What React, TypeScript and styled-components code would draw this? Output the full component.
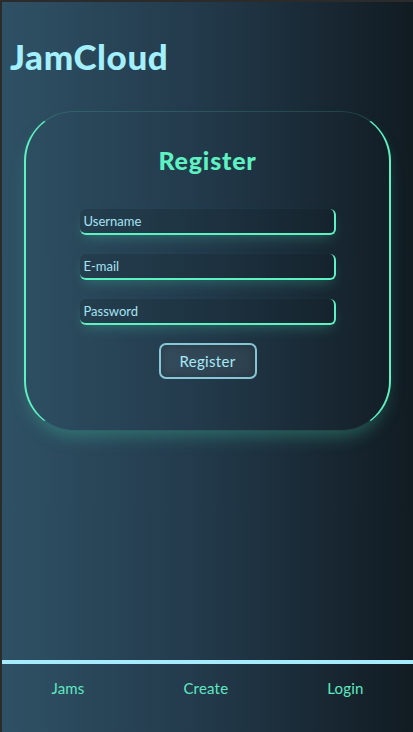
import React from "react";
import styled, { createGlobalStyle } from "styled-components";

const GlobalStyle = createGlobalStyle`
  html, body {
    margin: 0;
    padding: 0;
    background: #2b2b2b;
  }
  body {
    font-family: "Lato", "Open Sans", sans-serif;
  }
  * { box-sizing: border-box; }
`;

const mint = "#5ef2c2";

const Page = styled.div`
  height: 732px;
  border-top: 2px solid #2b2b2b;
  border-left: 2px solid #2b2b2b;
  background: linear-gradient(to right, #2f5165 0%, #22394a 50%, #111b22 100%);
  display: flex;
  flex-direction: column;
`;

const Header = styled.header`
  padding: 34px 0 0 8px;
`;

const Logo = styled.h1`
  margin: 0;
  font-size: 35px;
  line-height: 40px;
  font-weight: 900;
  letter-spacing: 0.6px;
  color: #a4effd;
`;

const Main = styled.main`
  flex: 1;
  padding: 35px 22px 0;
`;

const Card = styled.section`
  border-left: 2px solid ${mint};
  border-right: 2px solid ${mint};
  border-top: 1px solid rgba(94, 242, 194, 0.15);
  border-bottom: 1px solid rgba(94, 242, 194, 0.15);
  border-radius: 50px;
  padding: 33px 0 51px;
  box-shadow: 0 10px 18px -6px rgba(70, 220, 175, 0.35);
  display: flex;
  flex-direction: column;
  align-items: center;
`;

const Title = styled.h2`
  margin: 0 0 34px;
  font-size: 25px;
  line-height: 1.2;
  font-weight: 900;
  letter-spacing: 0.8px;
  color: ${mint};
`;

const Form = styled.form`
  display: flex;
  flex-direction: column;
  align-items: center;
  gap: 19px;
`;

const Field = styled.input`
  width: 256px;
  height: 26px;
  border: none;
  border-right: 2px solid ${mint};
  border-bottom: 2px solid ${mint};
  border-radius: 6px;
  background: rgba(10, 22, 30, 0.18);
  box-shadow: 0 6px 14px -4px rgba(70, 220, 175, 0.3);
  padding: 0 4px;
  font-family: "Lato", sans-serif;
  font-size: 13px;
  color: #a6e6f4;
  outline: none;
  &::placeholder {
    color: #a6e2f2;
    opacity: 1;
  }
`;

const Button = styled.button`
  margin-top: -1px;
  width: 98px;
  height: 36px;
  border: 2px solid rgba(150, 222, 236, 0.85);
  border-radius: 7px;
  background: rgba(255, 255, 255, 0.07);
  box-shadow: inset 0 0 8px rgba(0, 0, 0, 0.25);
  font-family: "Lato", sans-serif;
  font-size: 15px;
  letter-spacing: 0.3px;
  color: #a9e9f6;
  cursor: pointer;
`;

const Nav = styled.nav`
  height: 72px;
  border-top: 4px solid #a6ebfb;
  padding-top: 16px;
  display: flex;
  justify-content: space-around;
  align-items: flex-start;
`;

const NavLink = styled.a`
  font-size: 15px;
  line-height: 17px;
  letter-spacing: 0.2px;
  color: #5fe8c2;
  text-decoration: none;
`;

export default function App() {
  return (
    <>
      <GlobalStyle />
      <Page>
        <Header>
          <Logo>JamCloud</Logo>
        </Header>
        <Main>
          <Card>
            <Title>Register</Title>
            <Form onSubmit={(e) => e.preventDefault()}>
              <Field placeholder="Username" />
              <Field placeholder="E-mail" />
              <Field placeholder="Password" type="password" />
              <Button type="submit">Register</Button>
            </Form>
          </Card>
        </Main>
        <Nav>
          <NavLink href="#">Jams</NavLink>
          <NavLink href="#">Create</NavLink>
          <NavLink href="#">Login</NavLink>
        </Nav>
      </Page>
    </>
  );
}
